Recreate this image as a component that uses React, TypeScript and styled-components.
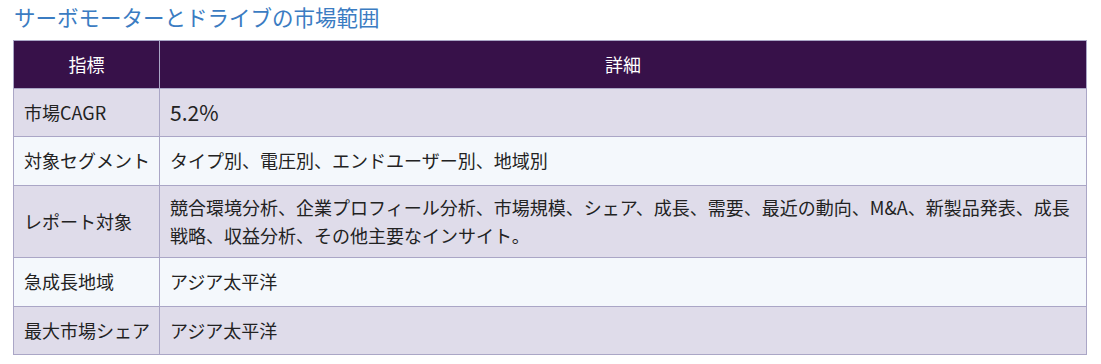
import React from 'react';
import styled, { createGlobalStyle } from 'styled-components';

const GlobalStyle = createGlobalStyle`
    body {
        margin: 0;
        background: #ffffff;
        font-family: "Noto Sans CJK JP", "Noto Sans", "Liberation Sans", sans-serif;
    }
`

type Row = {
    label: string;
    detail: string;
    height: number;
    big?: boolean;
};

const rows: Row[] = [
    { label: '市場CAGR', detail: '5.2%', height: 48, big: true },
    { label: '対象セグメント', detail: 'タイプ別、電圧別、エンドユーザー別、地域別', height: 49 },
    {
        label: 'レポート対象',
        detail: '競合環境分析、企業プロフィール分析、市場規模、シェア、成長、需要、最近の動向、M&A、新製品発表、成長戦略、収益分析、その他主要なインサイト。',
        height: 72,
    },
    { label: '急成長地域', detail: 'アジア太平洋', height: 49 },
    { label: '最大市場シェア', detail: 'アジア太平洋', height: 48 },
];

const MarketScope = () => {
    return (
        <Page>
            <GlobalStyle />
            <Title>サーボモーターとドライブの市場範囲</Title>
            <Table>
                <colgroup>
                    <col style={{ width: 146 }} />
                    <col />
                </colgroup>
                <thead>
                    <tr>
                        <HeadCell>指標</HeadCell>
                        <HeadCell>詳細</HeadCell>
                    </tr>
                </thead>
                <tbody>
                    {rows.map((row, i) => (
                        <BodyRow key={row.label} $h={row.height} $odd={i % 2 === 0}>
                            <LabelCell>{row.label}</LabelCell>
                            <DetailCell $big={row.big}>{row.detail}</DetailCell>
                        </BodyRow>
                    ))}
                </tbody>
            </Table>
        </Page>
    );
}

const Page = styled.div`
    padding: 2px 14px 0 13px;
`

const Title = styled.h2`
    margin: 0 0 8px 1px;
    font-size: 21.5px;
    font-weight: 400;
    line-height: 30px;
    color: #3b7cc2;
`

const Table = styled.table`
    width: 1074px;
    border-collapse: collapse;
    table-layout: fixed;
    border: 1px solid #aaa6c6;
    color: #222222;
    font-size: 18px;
    line-height: 27.5px;
`

const HeadCell = styled.th`
    height: 47px;
    padding: 0 10px;
    background: #371149;
    color: #ffffff;
    font-weight: 400;
    font-size: 18px;
    text-align: center;
    border: 1px solid #aaa6c6;
`

const BodyRow = styled.tr<{ $h: number; $odd: boolean }>`
    height: ${p => p.$h}px;
    background: ${p => (p.$odd ? '#dfdcea' : '#f4f8fc')};
`

const LabelCell = styled.td`
    padding: 0 4px 0 10px;
    vertical-align: middle;
    border: 1px solid #aaa6c6;
    white-space: nowrap;
`

const DetailCell = styled.td<{ $big?: boolean }>`
    padding: 0 6px 0 10px;
    vertical-align: middle;
    border: 1px solid #aaa6c6;
    font-size: ${p => (p.$big ? '21px' : '18px')};
`

export default MarketScope;
